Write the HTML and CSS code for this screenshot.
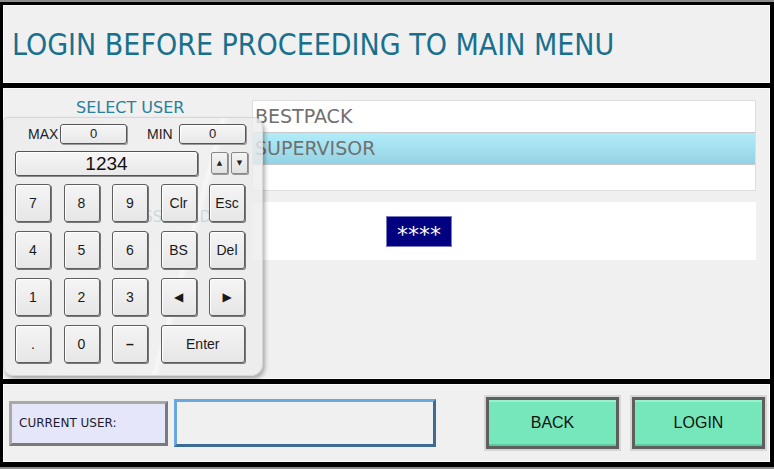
FILE: index.html
```html
<!DOCTYPE html>
<html lang="en">
<head>
    <meta charset="UTF-8">
    <title>Login</title>
    <link rel="stylesheet" href="styles.css">
</head>
<body>
    <div class="screen">
        <div class="panel header">
            <div class="title">LOGIN BEFORE PROCEEDING TO MAIN MENU</div>
        </div>

        <div class="panel main">
            <div class="label-col">
                <div class="field-label select-label">SELECT USER</div>
                <div class="field-label pass-label">PASSWORD</div>
            </div>
            <div class="box-col">
                <div class="user-list">
                    <div class="user-row">BESTPACK</div>
                    <div class="user-row selected">SUPERVISOR</div>
                </div>
                <div class="pass-box">
                    <span class="pass-mask">****</span>
                </div>
            </div>

            <div class="keypad">
                <div class="limits">
                    <span class="limit-label">MAX</span>
                    <span class="limit-box">0</span>
                    <span class="limit-label min">MIN</span>
                    <span class="limit-box">0</span>
                </div>
                <div class="display-row">
                    <div class="display">1234</div>
                    <button class="spin">&#9650;</button>
                    <button class="spin">&#9660;</button>
                </div>
                <div class="keys">
                    <button class="key">7</button>
                    <button class="key">8</button>
                    <button class="key">9</button>
                    <button class="key">Clr</button>
                    <button class="key">Esc</button>
                    <button class="key">4</button>
                    <button class="key">5</button>
                    <button class="key">6</button>
                    <button class="key">BS</button>
                    <button class="key">Del</button>
                    <button class="key">1</button>
                    <button class="key">2</button>
                    <button class="key">3</button>
                    <button class="key arrow">&#9664;</button>
                    <button class="key arrow">&#9654;</button>
                    <button class="key">.</button>
                    <button class="key">0</button>
                    <button class="key dash">&#8211;</button>
                    <button class="key enter">Enter</button>
                </div>
            </div>
        </div>

        <div class="panel footer">
            <div class="current-user">CURRENT USER:</div>
            <div class="user-field"></div>
            <button class="action back">BACK</button>
            <button class="action">LOGIN</button>
        </div>
    </div>
</body>
</html>
```

FILE: styles.css
```css
html, body {
    margin: 0;
    padding: 0;
}
body {
    background: #000;
    font-family: "DejaVu Sans Condensed", "DejaVu Sans", sans-serif;
}
.screen {
    width: 774px;
    height: 469px;
    box-sizing: border-box;
    border-top: 2px solid #8c8c8c;
    border-bottom: 2px solid #8c8c8c;
    padding: 3px 4px 5px 3px;
    display: flex;
    flex-direction: column;
    gap: 5px;
    overflow: hidden;
}
.panel {
    background: #f0f0f0;
    box-sizing: border-box;
    border: 1px solid #fafafa;
}
.header {
    height: 78px;
    display: flex;
    align-items: center;
    padding-left: 8px;
}
.title {
    color: #19708e;
    font-size: 30px;
    padding-top: 1px;
}

/* main area */
.main {
    height: 292px;
    position: relative;
    display: flex;
}
.label-col {
    width: 248px;
    position: relative;
}
.field-label {
    color: #2a7f9a;
    font-size: 16px;
    font-family: "DejaVu Sans", sans-serif;
    position: absolute;
}
.select-label {
    left: 72px;
    top: 9px;
}
.pass-label {
    left: 121px;
    top: 119px;
    font-size: 15px;
}
.box-col {
    padding-top: 11px;
    width: 504px;
    display: flex;
    flex-direction: column;
    gap: 11px;
}
.user-list {
    height: 91px;
    background: #fff;
    border: 1px solid #dedede;
    box-sizing: border-box;
}
.user-row {
    height: 31px;
    box-sizing: border-box;
    padding-left: 2px;
    line-height: 31px;
    font-size: 19px;
    font-family: "DejaVu Sans", sans-serif;
    color: #707070;
}
.user-row.selected {
    background: linear-gradient(#b2ecf9, #94d3e4);
    border-top: 1px solid #c8c8c8;
    border-bottom: 1px solid #c8c8c8;
    height: 33px;
}
.pass-box {
    height: 58px;
    background: #fff;
    display: flex;
    align-items: center;
    padding-left: 134px;
}
.pass-mask {
    background: #000080;
    color: #fff;
    font-size: 22px;
    font-family: "DejaVu Sans", sans-serif;
    width: 66px;
    height: 31px;
    line-height: 36px;
    text-align: center;
    letter-spacing: 0;
    margin-top: 1px;
    box-sizing: border-box;
    border: 1px solid #7a7ac0;
}

/* keypad overlay */
.keypad {
    position: absolute;
    left: -1px;
    top: 28px;
    width: 260px;
    height: 259px;
    box-sizing: border-box;
    padding: 6px 0 0 11px;
    border-radius: 4px 10px 12px 10px;
    background: linear-gradient(105deg, rgba(236,236,236,0.8) 0%, rgba(240,240,240,0.8) 66%, rgba(248,248,248,0.88) 67%, rgba(236,236,236,0.8) 69%, rgba(236,236,236,0.8) 100%);
    border: 1px solid #d6d6d6;
    box-shadow: 2px 3px 4px rgba(0,0,0,0.3);
    font-family: "Liberation Sans", Arial, sans-serif;
}
.limits {
    display: flex;
    align-items: center;
    height: 20px;
    font-size: 14px;
    color: #222;
}
.limit-label {
    margin-left: 13px;
    width: 32px;
}
.limit-label.min {
    margin-left: 20px;
}
.limit-box {
    width: 67px;
    height: 20px;
    box-sizing: border-box;
    border: 1px solid #555;
    border-radius: 3px;
    background: linear-gradient(#f6f6f6, #e8e8e8);
    box-shadow: inset 1px 1px 0 #fff, 1px 1px 0 #999;
    text-align: center;
    line-height: 18px;
    font-size: 13px;
}
.display-row {
    display: flex;
    align-items: center;
    margin-top: 7px;
    height: 25px;
}
.display {
    width: 183px;
    height: 25px;
    box-sizing: border-box;
    border: 1px solid #555;
    border-radius: 3px;
    background: linear-gradient(#f6f6f6, #e9e9e9);
    box-shadow: inset 1px 1px 0 #fff, 1px 1px 0 #888;
    text-align: center;
    font-size: 19px;
    line-height: 23px;
    color: #111;
    margin-right: 13px;
}
.spin {
    width: 17px;
    height: 22px;
    padding: 0;
    margin-right: 3px;
    border: 1px solid #888;
    border-radius: 2px;
    background: linear-gradient(#f4f4f4, #e2e2e2);
    box-shadow: 1px 1px 0 #999;
    font-size: 7px;
    color: #222;
    font-family: "DejaVu Sans", sans-serif;
}
.keys {
    margin-top: 8px;
    display: grid;
    grid-template-columns: repeat(5, 36px);
    grid-auto-rows: 38px;
    column-gap: 12.5px;
    row-gap: 9px;
}
.key {
    padding: 0;
    border: 1px solid #5e5e5e;
    border-radius: 3px;
    background: linear-gradient(rgba(245,245,245,0.96), rgba(230,230,230,0.96));
    box-shadow: inset 1px 1px 0 #fff, 1px 1px 0 #777;
    font-family: "Liberation Sans", Arial, sans-serif;
    font-size: 14px;
    color: #1a1a1a;
}
.key.arrow {
    font-family: "DejaVu Sans", sans-serif;
    font-size: 12px;
}
.key.dash {
    font-weight: bold;
}
.key.enter {
    grid-column: span 2;
}

/* footer */
.footer {
    height: 78px;
    display: flex;
    align-items: center;
    padding: 0 4px 0 5px;
}
.current-user {
    width: 159px;
    height: 45px;
    box-sizing: border-box;
    background: #e6e6fa;
    border-style: solid;
    border-width: 3px;
    border-color: #a8a8a8 #7a7a7a #7a7a7a #a8a8a8;
    font-size: 12px;
    color: #1c1c2c;
    display: flex;
    align-items: center;
    padding-left: 7px;
    font-family: "DejaVu Sans", sans-serif;
}
.user-field {
    width: 262px;
    height: 48px;
    margin-left: 6px;
    box-sizing: border-box;
    background: #f0f0f0;
    border-style: solid;
    border-width: 3px;
    border-color: #6aa7dc #3c6c96 #3c6c96 #6aa7dc;
}
.action {
    width: 133px;
    height: 52px;
    box-sizing: border-box;
    background: #75e7bb;
    border: 3px solid #5e5e5e;
    outline: 2px solid #d6d6d6;
    box-shadow: inset 0 2px 0 #98f0cf, inset 0 -2px 0 #5cc99f;
    font-family: "Liberation Sans", Arial, sans-serif;
    font-size: 16px;
    color: #111;
    margin-left: 13px;
}
.action.back {
    margin-left: auto;
}
```
